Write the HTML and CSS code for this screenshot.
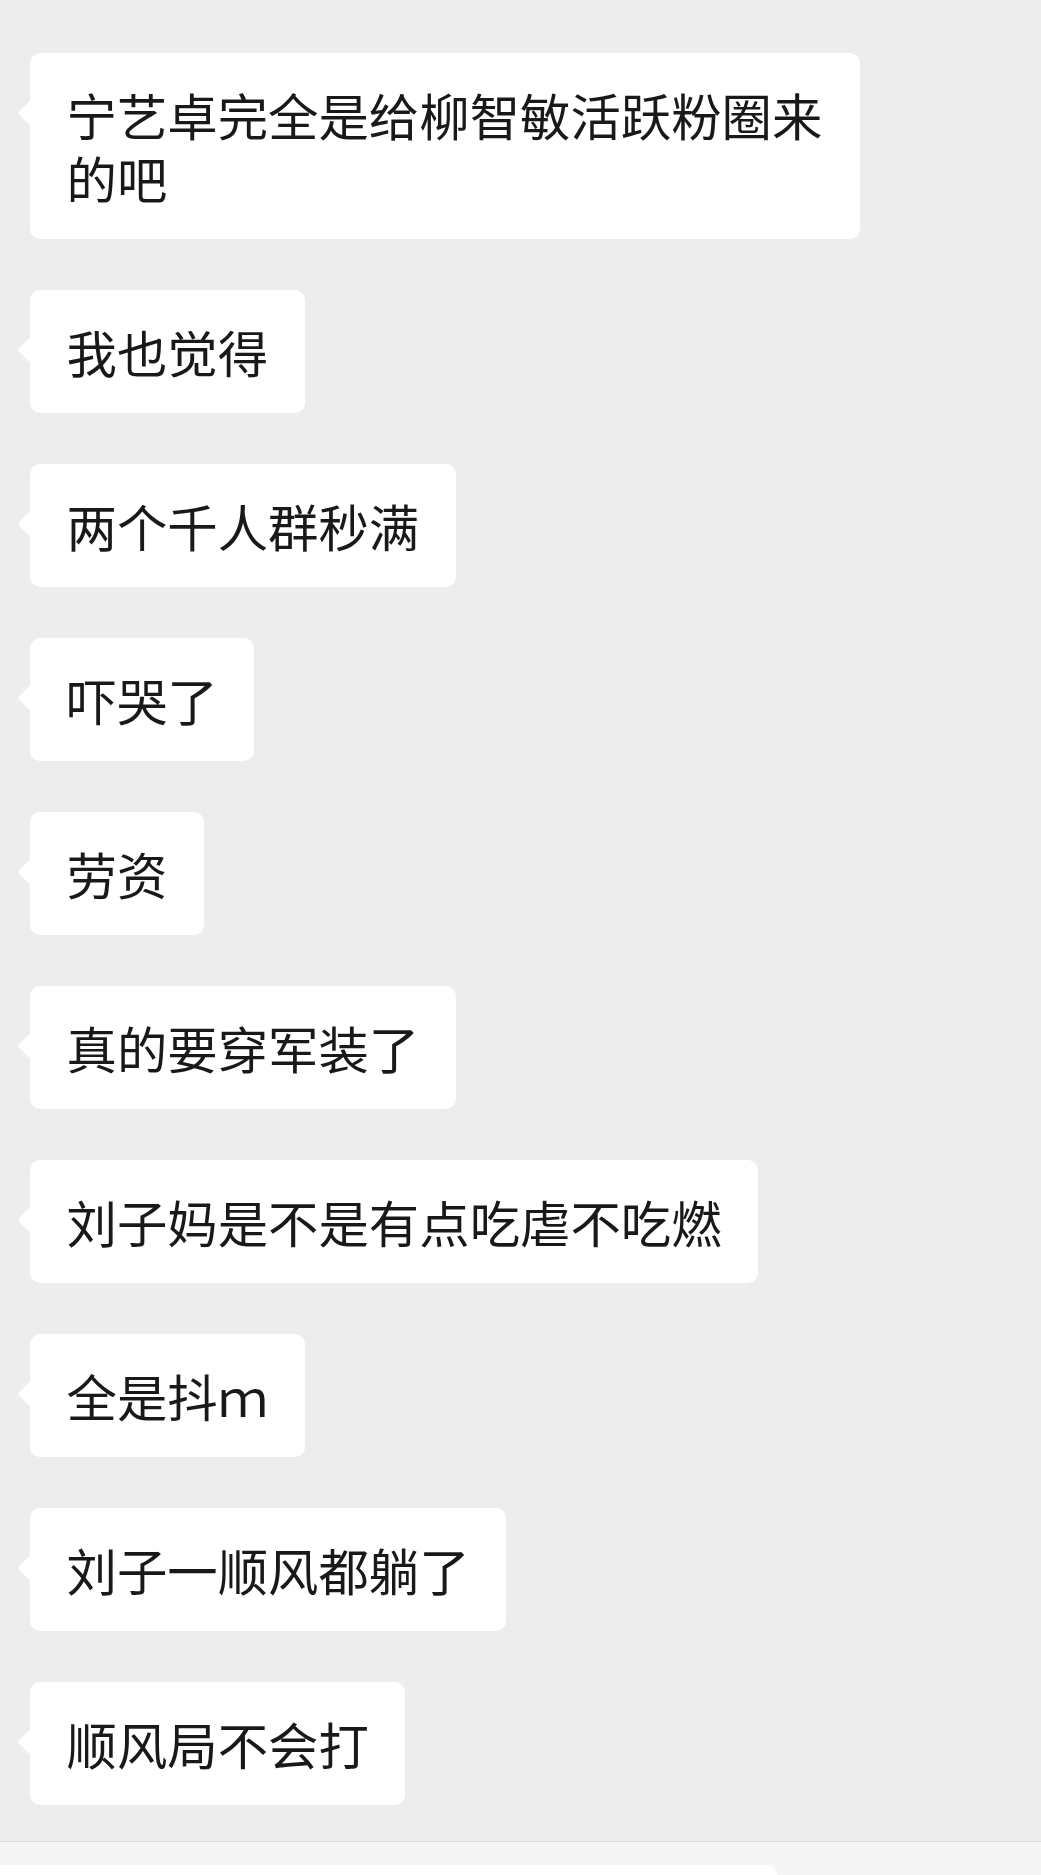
FILE: index.html
```html
<!DOCTYPE html>
<html lang="zh-CN">
<head>
    <meta charset="UTF-8">
    <meta name="viewport" content="width=device-width, initial-scale=1.0">
    <title>聊天</title>
    <link rel="stylesheet" href="styles.css">
</head>
<body>
    <div class="chat">
        <div class="bubble">宁艺卓完全是给柳智敏活跃粉圈来的吧</div>
        <div class="bubble">我也觉得</div>
        <div class="bubble">两个千人群秒满</div>
        <div class="bubble">吓哭了</div>
        <div class="bubble">劳资</div>
        <div class="bubble">真的要穿军装了</div>
        <div class="bubble">刘子妈是不是有点吃虐不吃燃</div>
        <div class="bubble">全是抖ｍ</div>
        <div class="bubble">刘子一顺风都躺了</div>
        <div class="bubble">顺风局不会打</div>
    </div>
    <div class="input-bar">
        <div class="input-box"></div>
    </div>
</body>
</html>
```

FILE: styles.css
```css
html, body {
    margin: 0;
    height: 100%;
    overflow: hidden;
}
body {
    font-family: "Noto Sans CJK SC", "Noto Sans", sans-serif;
    background-color: #ededed;
    color: #191919;
}
.chat {
    display: flex;
    flex-direction: column;
    align-items: flex-start;
    gap: 51px;
    padding: 53px 0 36px 30px;
}
.bubble {
    position: relative;
    box-sizing: border-box;
    max-width: 830px;
    padding: 30px 36.5px;
    background-color: #fff;
    border-radius: 10px;
    font-size: 50.4px;
    line-height: 63px;
}
/* little arrow pointing at the sender */
.bubble::before {
    content: "";
    position: absolute;
    left: -9px;
    top: 51px;
    width: 18px;
    height: 18px;
    background-color: #fff;
    border-radius: 3px;
    transform: rotate(45deg);
}
.input-bar {
    border-top: 1px solid #dcdcdc;
    background-color: #f5f5f5;
    padding-top: 23px;
    height: 100px;
}
.input-box {
    width: 777px;
    height: 80px;
    background-color: #fff;
    border-radius: 0 10px 0 0;
}
```
